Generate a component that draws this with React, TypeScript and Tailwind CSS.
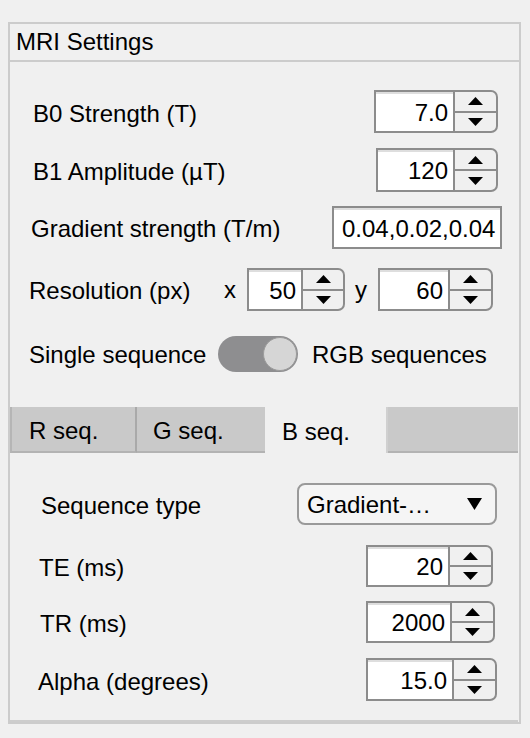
import React from "react";

function Arrow({ up }: { up: boolean }) {
  return (
    <svg width="15" height="8" viewBox="0 0 15 8">
      {up ? <polygon points="0,8 7.5,0 15,8" fill="#000" /> : <polygon points="0,0 15,0 7.5,8" fill="#000" />}
    </svg>
  );
}

function Spinner({ value, textW, btnW, h }: { value: string; textW: number; btnW: number; h: number }) {
  return (
    <div className="flex" style={{ height: h }}>
      <div
        className="bg-white border-2 border-[#8c8c8c] flex items-center justify-end pr-[5px] pt-[2px] shadow-[inset_0_2px_0_#dedede]"
        style={{ width: textW }}
      >
        {value}
      </div>
      <div
        className="flex flex-col border-2 border-l-0 border-[#8c8c8c] rounded-r-[7px] bg-[#f0f0f0]"
        style={{ width: btnW }}
      >
        <div className="flex-1 flex items-center justify-center border-b-2 border-[#8c8c8c]">
          <Arrow up />
        </div>
        <div className="flex-1 flex items-center justify-center">
          <Arrow up={false} />
        </div>
      </div>
    </div>
  );
}

export default function App() {
  return (
    <div
      className="w-[530px] h-[738px] bg-[#f0f0f0] pt-[22px] pl-[8px] text-[24px] text-black leading-none"
      style={{ fontFamily: '"Liberation Sans", Arial, sans-serif' }}
    >
      <div className="w-[513px] h-[702px] border-2 border-[#cccccc] flex flex-col">
        <div className="h-[38px] flex items-center pl-[6px] border-b-2 border-[#cccccc] shrink-0">MRI Settings</div>

        <div className="mt-[28px] h-[43px] flex items-center">
          <span className="ml-[23px] mt-[4px]">B0 Strength (T)</span>
          <div className="ml-auto mr-[21px]">
            <Spinner value="7.0" textW={81} btnW={43} h={43} />
          </div>
        </div>

        <div className="mt-[15px] h-[44px] flex items-center">
          <span className="ml-[23px] mt-[3px]">B1 Amplitude (µT)</span>
          <div className="ml-auto mr-[21px]">
            <Spinner value="120" textW={79} btnW={43} h={44} />
          </div>
        </div>

        <div className="mt-[14px] h-[43px] flex items-center">
          <span className="ml-[21px] mt-[3px]">Gradient strength (T/m)</span>
          <div className="ml-auto mr-[17px] w-[170px] h-[43px] bg-white border-2 border-[#8c8c8c] flex items-center pl-[8px] pt-[2px] shadow-[inset_0_2px_0_#dedede]">
            0.04,0.02,0.04
          </div>
        </div>

        <div className="mt-[19px] h-[43px] flex items-center">
          <span className="ml-[19px] w-[195px] mt-[2px]">Resolution (px)</span>
          <span className="w-[23px]">x</span>
          <Spinner value="50" textW={56} btnW={42} h={43} />
          <span className="ml-[10px] w-[23px]">y</span>
          <Spinner value="60" textW={72} btnW={43} h={43} />
        </div>

        <div className="mt-[25px] h-[36px] flex items-center">
          <span className="ml-[19px] w-[189px] mt-[1px]">Single sequence</span>
          <div className="w-[80px] h-[36px] rounded-full bg-[#8e8e90] flex items-center justify-end pr-[1px]">
            <div className="w-[34px] h-[34px] rounded-full bg-[#d6d6d6] border border-[#9c9c9c]" />
          </div>
          <span className="ml-[14px] mt-[1px]">RGB sequences</span>
        </div>

        <div className="mt-[35px] flex-1 flex flex-col mr-[1px] border-b-2 border-[#cdcdcd]">
          <div className="h-[46px] flex shrink-0 bg-[#c9c9c9]">
            <div className="w-[127px] flex items-center pl-[17px] pt-[3px] border-l-2 border-r-2 border-l-[#b5b5b5] border-r-[#a9a9a9] border-b-2 border-b-[#b3b3b3]">
              R seq.
            </div>
            <div className="w-[128px] flex items-center pl-[16px] pt-[3px] border-b-2 border-[#b3b3b3]">G seq.</div>
            <div className="w-[123px] flex items-center pl-[17px] pt-[3px] bg-[#f0f0f0] border-r-2 border-[#d0d0d0]">B seq.</div>
            <div className="flex-1 border-b-2 border-[#b3b3b3]" />
          </div>

          <div className="mt-[30px] h-[42px] flex items-center">
            <span className="ml-[31px] mt-[3px]">Sequence type</span>
            <div className="ml-auto mr-[21px] w-[200px] h-[42px] rounded-[8px] border-2 border-[#9a9a9a] bg-[#f5f5f5] flex items-center pl-[8px] pr-[13px]">
              <span className="mt-[2px]">Gradient-…</span>
              <svg className="ml-auto" width="15" height="12" viewBox="0 0 15 12">
                <polygon points="0,0 15,0 7.5,12" fill="#000" />
              </svg>
            </div>
          </div>

          <div className="mt-[20px] h-[42px] flex items-center">
            <span className="ml-[29px] mt-[3px]">TE (ms)</span>
            <div className="ml-auto mr-[25px]">
              <Spinner value="20" textW={84} btnW={43} h={42} />
            </div>
          </div>

          <div className="mt-[14px] h-[42px] flex items-center">
            <span className="ml-[30px] mt-[3px]">TR (ms)</span>
            <div className="ml-auto mr-[23px]">
              <Spinner value="2000" textW={86} btnW={43} h={42} />
            </div>
          </div>

          <div className="mt-[15px] h-[43px] flex items-center">
            <span className="ml-[28px] mt-[4px]">Alpha (degrees)</span>
            <div className="ml-auto mr-[21px]">
              <Spinner value="15.0" textW={88} btnW={43} h={43} />
            </div>
          </div>
        </div>
      </div>
    </div>
  );
}
